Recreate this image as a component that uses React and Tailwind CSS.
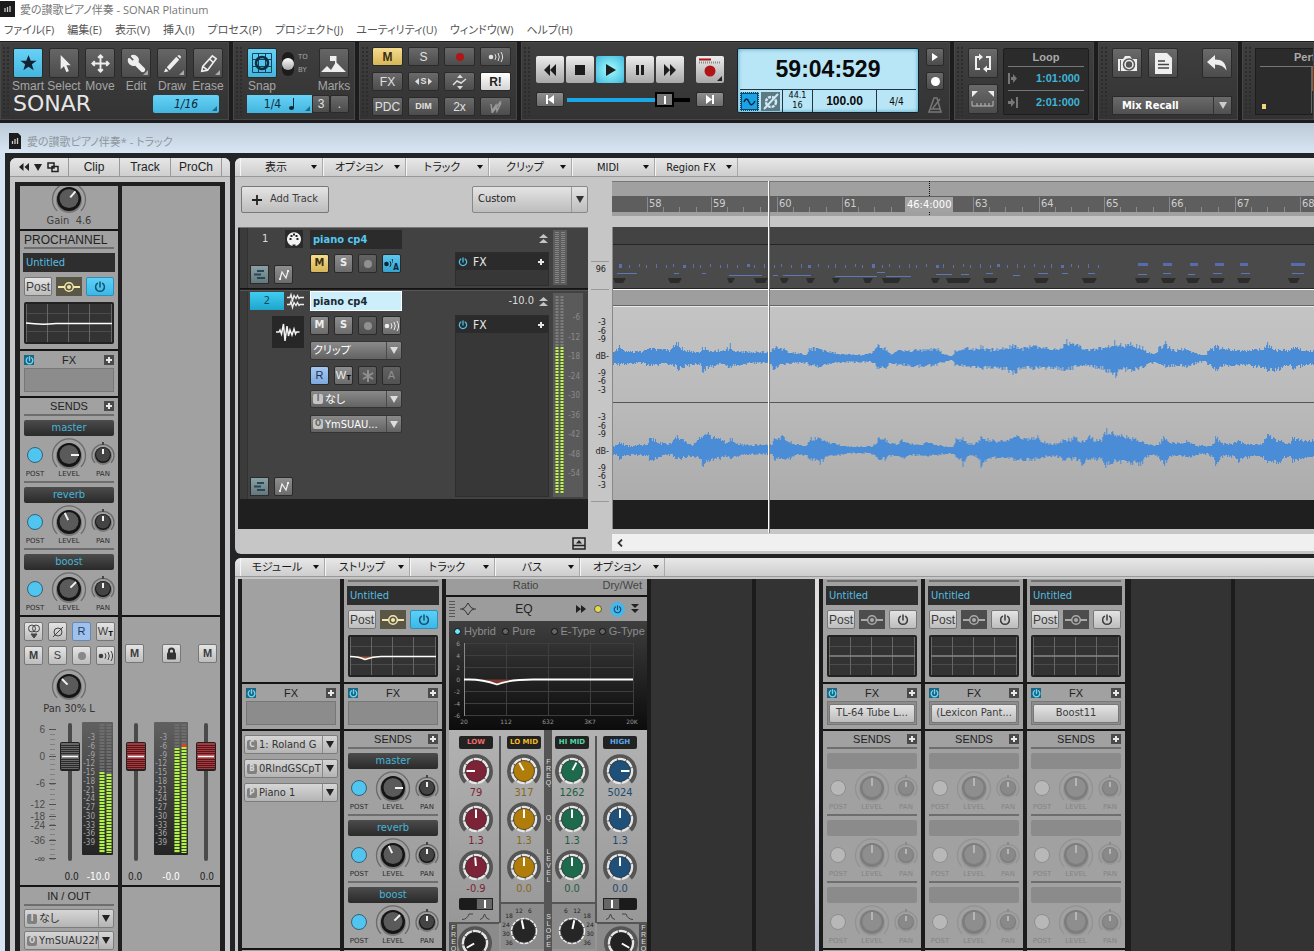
import { Wrench } from 'lucide-react'

const KNOB_COLORS = {
  red: '#7d2337',
  amber: '#b07c0a',
  green: '#1d6b4c',
  blue: '#1f5079',
}

/* ---------- drawings ---------- */

function PowerIcon({ size = 10, color = 'currentColor', width = 1.5 }) {
  return (
    <svg width={size} height={size} viewBox="0 0 12 12" fill="none" stroke={color} strokeWidth={width} strokeLinecap="round">
      <path d="M6 1v5M3.4 2.4a4.4 4.4 0 1 0 5.2 0" />
    </svg>
  )
}

function EchoIcon({ className = '' }) {
  return (
    <svg width="16" height="12" viewBox="0 0 16 12" className={className} fill="none" stroke="currentColor">
      <circle cx="3" cy="6" r="2.3" fill="currentColor" stroke="none" />
      <path d="M7 3.2q2 2.8 0 5.6M10 2q2.6 4 0 8M13 1q3.2 5 0 10" />
    </svg>
  )
}

function Plus({ className = '' }) {
  return (
    <svg width="10" height="10" viewBox="0 0 10 10" className={className}>
      <path d="M5 2v6M2 5h6" stroke="#e8e8e8" strokeWidth="2" />
    </svg>
  )
}

function Down({ className = '' }) {
  return (
    <svg width="8" height="7" viewBox="0 0 8 7" className={className}>
      <path d="M0 0h8L4 7z" fill="currentColor" />
    </svg>
  )
}

function DocLogo() {
  return (
    <svg width="12" height="16" viewBox="0 0 12 16">
      <path d="M0 0h9l3 3v13H0z" fill="#1c1c1c" />
      <path d="M3.5 8v3M6 6v5M8.5 5v6" stroke="#ccc" strokeWidth="1.3" />
    </svg>
  )
}

function Knob({ angle = 0, small = false, label }) {
  const w = small ? 24 : 36
  const c = w / 2
  const r = small ? 8 : 12
  const ring = small ? 11 : 16.5
  const d = ring * 0.72
  return (
    <span className="relative block shrink-0">
      <svg width={w} height="34" viewBox={`0 0 ${w} 34`} className="block">
        <path
          d={`M${c - d} ${19 + d}A${ring} ${ring} 0 1 1 ${c + d} ${19 + d}`}
          fill="none" stroke="#6b6b6b" strokeWidth="1.3"
        />
        {small && <path d={`M${c} 6v3`} stroke="#444" strokeWidth="2" />}
        <circle cx={c} cy="20" r={r + 1} fill="#000" opacity=".25" />
        <circle cx={c} cy="19" r={r} fill="#151515" />
        <circle cx={c} cy="18.5" r={small ? 7 : 9.5} fill={small ? '#444' : '#5a5a5a'} />
        <path d={`M${c} ${19 - r + 2}V${small ? 18 : 17}`} stroke="#f2f2f2" strokeWidth="2" transform={`rotate(${angle} ${c} 19)`} />
      </svg>
      <input type="range" aria-label={label} className="absolute inset-0 h-full w-full cursor-pointer opacity-0" />
    </span>
  )
}

function EqKnob({ color, angle, label }) {
  return (
    <span className="relative block shrink-0">
      <svg width="36" height="34" viewBox="0 0 36 34" className="block">
        <path d="M7.5 30A15 15 0 1 1 28.5 30" fill="none" stroke="#555" strokeWidth="4" />
        <circle cx="18" cy="19" r="12" fill="#444" stroke="#e6e6e6" strokeWidth="2.5" strokeDasharray="8 1" />
        <circle cx="18" cy="19" r="10.5" fill={KNOB_COLORS[color] || '#222'} stroke="#222" strokeOpacity=".4" />
        <path d="M18 9.5V18" stroke="#fff" strokeWidth="2" transform={`rotate(${angle} 18 19)`} />
      </svg>
      <input type="range" aria-label={label} className="absolute inset-0 h-full w-full cursor-pointer opacity-0" />
    </span>
  )
}

function Fader({ red = false, label }) {
  const grooves = [24, 26, 28, 30, 32, 38, 40, 42, 44, 46]
  return (
    <span className="relative block w-5 shrink-0">
      <svg width="20" height="142" className="block">
        <rect x="8" y="2" width="4" height="138" rx="2" fill="#4a4a4a" />
        <rect x="0" y="21" width="20" height="29" rx="2" fill="#222" />
        <rect x="1" y="22" width="18" height="26" rx="1" fill={red ? '#a33b41' : '#666'} />
        {grooves.map(y => <path key={y} d={`M1 ${y}.5h18`} stroke={red ? '#5b1418' : '#2b2b2b'} />)}
        <path d="M2 35.5h16" stroke="#fff" strokeWidth="1.5" />
      </svg>
      <input type="range" aria-label={label} className="absolute inset-0 h-full w-full cursor-pointer opacity-0" />
    </span>
  )
}

function StripMeter({ width, bars }) {
  return (
    <svg width={width} height="142" className="block shrink-0 font-['DejaVu_Sans_Condensed','DejaVu_Sans',sans-serif]">
      <defs>
        <linearGradient id="meterBack" x2="0" y2="1">
          <stop offset="0" stopColor="#606060" />
          <stop offset="1" stopColor="#242424" />
        </linearGradient>
      </defs>
      <rect y="1" width={width} height="133" rx="1" fill="url(#meterBack)" />
      {Array.from({ length: 13 }, (_, i) => (
        <text key={i} x="13" y={19 + i * 8.75} fontSize="8" textAnchor="end" fill="#a5a5a5">{-3 * (i + 1)}</text>
      ))}
      {bars.map(b => (
        <g key={b.x} strokeWidth="5" strokeDasharray="2 1">
          <path d={`M${b.x} 3V132`} stroke="#6d6d6d" />
          <path d={`M${b.x} ${b.top}V132`} stroke="#37501a" strokeDasharray="none" />
          <path d={`M${b.x} ${b.top}V132`} stroke="#b6f04e" />
          {b.clip && <path d={`M${b.x} ${b.top - 3}v3`} stroke="#d8402a" strokeDasharray="none" />}
        </g>
      ))}
    </svg>
  )
}

const FADER_MARKS = [['6', 8], ['0', 35], ['-6', 62], ['-12', 83], ['-18', 95], ['-24', 104], ['-36', 119], ['-∞', 137]]

function FaderScale() {
  return (
    <svg width="40" height="142" className="block shrink-0 font-['Liberation_Sans',sans-serif]">
      {Array.from({ length: 27 }, (_, i) => (
        <path key={i} d={`M30 ${8.5 + i * 5}h5`} stroke="#808080" />
      ))}
      {FADER_MARKS.map(([t, y]) => (
        <g key={t}>
          <text x="25" y={y + 4} fontSize="10" textAnchor="end" fill="#4a4a4a">{t}</text>
          <path d={`M29 ${y}.5h7`} stroke="#4f4f4f" />
        </g>
      ))}
    </svg>
  )
}

/* ---------- small controls ---------- */

function LightButton({ className = '', children, label }) {
  return (
    <button
      aria-label={label}
      className={`flex h-[19px] shrink-0 items-center justify-center rounded-[2px] border border-[#777] bg-linear-to-b from-[#e4e4e4] to-[#bdbdbd] text-[#3c3c3c] ${className}`}
    >
      {children}
    </button>
  )
}

const TONES = {
  dark: 'from-[#6a6a6a] to-[#4c4c4c] text-[#e0e0e0]',
  gray: 'from-[#8e8e8e] to-[#6c6c6c] text-[#eeeeee]',
  off: 'from-[#626262] to-[#525252] text-[#909090]',
  yellow: 'from-[#f5dc8e] to-[#d6b557] text-[#3a2f10]',
  sky: 'from-[#5cc8ef] to-[#37a3cf] text-[#082836]',
  blue: 'from-[#a5c8f2] to-[#7ea9de] text-[#1c3350]',
  white: 'from-white to-[#d4d4d4] text-[#222222]',
}

function DarkButton({ tone = 'dark', className = '', children, label }) {
  return (
    <button
      aria-label={label}
      className={`flex shrink-0 items-center justify-center rounded-[2px] border border-[#2a2a2a] bg-linear-to-b ${TONES[tone]} ${className}`}
    >
      {children}
    </button>
  )
}

function Picker({ icon, value, label, className = '', dark = false }) {
  return (
    <div
      className={`flex items-center rounded-[2px] border text-[11px] font-['DejaVu_Sans_Condensed','Noto_Sans_CJK_JP',sans-serif] ${dark
        ? 'border-[#333] bg-linear-to-b from-[#8a8a8a] to-[#636363] text-white'
        : 'border-[#7c7c7c] bg-linear-to-b from-[#d6d6d6] to-[#b4b4b4] text-[#333]'} ${className}`}
    >
      {icon && (
        <span className={`ml-[2px] flex h-[10px] w-[10px] shrink-0 items-center justify-center rounded-[2px] text-[8px] font-bold ${dark ? 'bg-[#c4c4c4] text-[#666]' : 'bg-[#808080] text-[#d8d8d8]'}`}>
          {icon}
        </span>
      )}
      <select aria-label={label} className="h-full min-w-0 flex-1 appearance-none overflow-hidden bg-transparent pl-[2px] leading-none outline-none [font-feature-settings:'palt']">
        <option>{value}</option>
      </select>
      <span className={`flex h-full w-[15px] shrink-0 items-center justify-center border-l ${dark ? 'border-[#4a4a4a] text-[#ddd]' : 'border-[#888] text-[#222]'}`}>
        <Down />
      </span>
    </div>
  )
}

/* ---------- channel strip sections ---------- */

function Divider() {
  return <div className="h-[2px] shrink-0 bg-[#141414]" />
}

function ProChannel({ on = false, curve = false }) {
  return (
    <div className="px-1 pb-[5px]">
      <div className="h-[2px] bg-[#6e6e6e]" />
      <button className="-mx-px mt-1 block h-[19px] w-[92px] bg-[#2e2e2e] px-[3px] text-left text-[11px] leading-[19px] text-[#55bfe0] font-['DejaVu_Sans_Condensed',sans-serif]">
        Untitled
      </button>
      <div className="mt-[5px] flex justify-between font-['Liberation_Sans',sans-serif]">
        <LightButton className="w-7 text-[12px]">Post</LightButton>
        <button aria-label="Routing" className={`flex h-[19px] w-[26px] items-center justify-center ${on ? 'bg-[#5a5646] text-[#f3e7ae]' : 'bg-[#4d4d4d] text-[#aaa]'}`}>
          <svg width="24" height="12" viewBox="0 0 24 12" fill="none" stroke="currentColor" strokeWidth="1.5">
            <path d="M1 6h7M16 6h7" strokeWidth="2" />
            <circle cx="12" cy="6" r="4.3" />
            <circle cx="12" cy="6" r="2" fill="currentColor" stroke="none" />
          </svg>
        </button>
        {on ? (
          <button aria-label="Power" className="flex h-[19px] w-7 items-center justify-center rounded-[2px] border border-[#2f8fb4] bg-linear-to-b from-[#5cd0f8] to-[#3bb8e8] text-[#14506b]">
            <PowerIcon size={12} />
          </button>
        ) : (
          <LightButton label="Power" className="w-7"><PowerIcon size={12} /></LightButton>
        )}
      </div>
      <svg width="90" height="42" className="mt-[6px] block">
        <rect width="90" height="42" rx="2" fill="#222" />
        <rect x="2" y="2" width="86" height="38" fill="#333" />
        <path d="M2 11.5h86M2 29.5h86" stroke="#4c4c4c" />
        <path d="M2.5 2v38M23.5 2v38M44.5 2v38M65.5 2v38M87.5 2v38" stroke="#666" />
        {curve && <path d="M3 21.500q8 0 14 2.500q8-2.500 16-2.500z" fill="#a2553a" />}
        {on
          ? <path d={curve ? 'M2 21.5q9 0 15 3q8-3 16-3h55' : 'M2 21q15 2 30 .5h56'} fill="none" stroke="#fff" strokeWidth="1.5" />
          : <path d="M2 21h86" stroke="#888" strokeWidth="1.5" />}
      </svg>
    </div>
  )
}

function PlusBox() {
  return (
    <button aria-label="Add" className="flex h-[10px] w-[10px] items-center justify-center bg-[#4a4a4a]">
      <Plus />
    </button>
  )
}

function FxRack({ plugin }) {
  return (
    <div className="h-[45px] px-1 pt-px">
      <div className="flex h-4 items-center justify-between text-[11px] text-[#222] font-['Liberation_Sans',sans-serif]">
        <button aria-label="FX power" className="flex h-[10px] w-[10px] items-center justify-center bg-[#1b6682] text-[#6fd4f2]">
          <PowerIcon size={9} width={1.8} />
        </button>
        <span>FX</span>
        <PlusBox />
      </div>
      <div className="flex h-6 items-center justify-center border border-[#777] bg-[#8c8c8c]">
        {plugin && (
          <LightButton className="w-[86px] text-[11px] whitespace-nowrap font-['DejaVu_Sans_Condensed',sans-serif]">{plugin}</LightButton>
        )}
      </div>
    </div>
  )
}

function Send({ name, level, last, off }) {
  return (
    <div>
      <div className={`h-4 rounded-[2px] text-center text-[11px] leading-4 text-[#46b4d8] font-['DejaVu_Sans_Condensed',sans-serif] ${off ? 'bg-[#8b8b8b]' : 'bg-linear-to-b from-[#4c4c4c] to-[#2a2a2a]'}`}>
        {name}
      </div>
      <div className={`grid h-[45px] grid-cols-[22px_46px_22px] text-[7px] leading-[9px] text-[#2c2c2c] font-['DejaVu_Sans',sans-serif] ${off ? 'opacity-25' : ''}`}>
        <div className="flex flex-col items-center">
          <span className="flex h-[34px] items-center pt-1">
            <button aria-label="Post" className={`h-4 w-4 rounded-full border ${off ? 'border-[#555] bg-white' : 'border-[#3a5f70] bg-[#4fc5f0]'}`} />
          </span>
          POST
        </div>
        <div className="flex flex-col items-center"><Knob angle={level} label="Send level" />LEVEL</div>
        <div className="flex flex-col items-center"><Knob small label="Send pan" />PAN</div>
      </div>
      {!last && <div className="mb-1 h-[2px] bg-[#6e6e6e]" />}
    </div>
  )
}

const SENDS = [
  { name: 'master', level: 90 },
  { name: 'reverb', level: -25 },
  { name: 'boost', level: 45 },
]

function Sends({ off = false }) {
  return (
    <div className="px-1">
      <div className="flex h-4 items-center justify-between text-[11px] text-[#222] font-['Liberation_Sans',sans-serif]">
        <span className="w-[10px]" />
        <span>SENDS</span>
        <PlusBox />
      </div>
      <div className="mb-1 h-[2px] bg-[#6e6e6e]" />
      {SENDS.map((s, i) => (
        <Send key={s.name} name={off ? '' : s.name} level={off ? 0 : s.level} last={i === 2} off={off} />
      ))}
    </div>
  )
}

/* ---------- top tool bar ---------- */

function Module({ className = '', children }) {
  return (
    <section className={`flex h-[78px] shrink-0 border border-[#474747] bg-linear-to-b from-[#3f3f3f] to-[#333] ${className}`}>
      <span className="my-[3px] ml-[1px] w-[9px] shrink-0 bg-[radial-gradient(#2c2c2c_1px,transparent_1px)] bg-[size:4px_4px]" />
      {children}
    </section>
  )
}

const TOOLS = [
  { name: 'Smart', on: true, icon: <path d="M12 3l2.3 6h6.200l-5 3.900 1.900 6.100L12 15.300 6.600 19l1.900-6.100-5-3.900h6.200z" fill="#112233" stroke="none" /> },
  { name: 'Select', icon: <path d="M8 3v15l3.400-3.200L14 21l2.600-1.200-2.600-6h4.500z" fill="#eee" stroke="none" /> },
  { name: 'Move', icon: <path d="M12 4v16M4 12h16M9.500 6L12 3.500 14.500 6M9.500 18l2.500 2.500 2.500-2.500M6 9.500L3.500 12 6 14.500M18 9.500l2.500 2.500-2.500 2.500" /> },
  { name: 'Edit', corner: true },
  { name: 'Draw', corner: true, icon: <path d="M3 21l2-4L8 20zM6 16L16 5l3 3L9 19zM17 4l2-1 2 2-1 2z" fill="#eee" stroke="none" /> },
  { name: 'Erase', corner: true, icon: <path d="M5 20l1-5L16 4l4 3-9 12zM6 15l5 4M13 7l4 4" strokeWidth="1.700" /> },
]

function Corner({ dark }) {
  return (
    <svg width="5" height="5" className="absolute right-[2px] bottom-[2px]">
      <path d="M5 0v5H0z" fill={dark ? '#1c6c88' : '#aaa'} />
    </svg>
  )
}

function ToolIcon({ tool }) {
  if (tool.name === 'Edit') return <Wrench size={19} strokeWidth={2} fill="#eee" className="-scale-x-100" />
  return <svg width="23" height="23" viewBox="0 0 24 24" fill="none" stroke="#eee" strokeWidth="2">{tool.icon}</svg>
}

const SKY = 'bg-linear-to-b from-[#67d2f7] to-[#43b5de] text-[#0e2a36]'

function ToolsModule() {
  return (
    <Module className="w-[229px]">
      <div className="pt-[5px] pl-[2px]">
        <div className="flex gap-[6px]">
          {TOOLS.map(t => (
            <button key={t.name} className="flex w-[30px] flex-col items-center text-[12px] text-[#a5a5a5]">
              <span className={`relative flex h-[30px] w-[30px] items-center justify-center rounded-[2px] border border-[#2a2a2a] ${t.on ? SKY : 'bg-linear-to-b from-[#666] to-[#4c4c4c] text-[#eee]'}`}>
                <ToolIcon tool={t} />
                {t.corner && <Corner />}
              </span>
              <span className="leading-4">{t.name}</span>
            </button>
          ))}
        </div>
        <div className="flex h-5 items-center justify-between">
          <span className="text-[22px] leading-5 text-[#e6e6e6] font-['DejaVu_Sans',sans-serif]">SONAR</span>
          <button className={`relative mr-[4px] h-[18px] w-[66px] rounded-[2px] text-[12px] italic font-['DejaVu_Sans_Condensed',sans-serif] ${SKY}`}>
            1/16<Corner dark />
          </button>
        </div>
      </div>
    </Module>
  )
}

function SnapModule() {
  return (
    <Module className="w-[122px]">
      <div className="ml-px w-[105px] pt-[5px] pl-[2px] text-[12px] text-[#a5a5a5]">
        <div className="flex">
          <button className="flex w-[30px] flex-col items-center">
            <span className={`flex h-[30px] w-[30px] items-center justify-center rounded-[2px] border border-[#2a2a2a] ${SKY}`}>
              <svg width="22" height="22" fill="none" stroke="#12455a">
                <path d="M1.5 1.5h19v19h-19zM7.5 1v20M14.5 1v20M1 7.5h20M1 14.5h20" />
                <circle cx="11" cy="11" r="6" strokeWidth="2.5" stroke="#0c2e3e" />
              </svg>
            </span>
            <span className="leading-4">Snap</span>
          </button>
          <button aria-label="Snap to or by" className="mt-1 ml-[5px] h-6 w-3 rounded-full bg-[#1c1c1c]">
            <span className="block h-3 w-3 rounded-full bg-linear-to-b from-white to-[#aaa]" />
          </button>
          <span className="mt-[3px] ml-[4px] flex w-4 flex-col text-[7px] leading-[13px] font-['DejaVu_Sans',sans-serif]"><span>TO</span><span>BY</span></span>
          <button className="ml-[4px] flex w-[32px] flex-col items-center">
            <span className="flex h-[30px] w-[30px] items-center justify-center rounded-[2px] border border-[#2a2a2a] bg-linear-to-b from-[#666] to-[#4c4c4c]">
              <svg width="26" height="22" fill="#eee">
                <path d="M0 20l6-6 4 4 5-8 10 10zM14 12V4h1.500v8zM9 4h6v5H9z" />
              </svg>
            </span>
            <span className="leading-4">Marks</span>
          </button>
        </div>
        <div className="mt-px flex h-[18px] w-[102px]">
          <button className={`relative flex w-[65px] items-center justify-center gap-2 ${SKY} font-['DejaVu_Sans_Condensed',sans-serif]`}>
            1/4
            <svg width="6" height="12"><ellipse cx="2.500" cy="10" rx="2.500" ry="2" fill="#0e2a36" /><path d="M4.500 0v10" stroke="#0e2a36" /></svg>
            <Corner dark />
          </button>
          <DarkButton className="w-[18px]">3</DarkButton>
          <DarkButton className="w-[19px]">.</DarkButton>
        </div>
      </div>
    </Module>
  )
}

const MIX_BUTTONS = [
  { id: 'mute', text: 'M', tone: 'yellow', bold: true },
  { id: 'solo', text: 'S' },
  { id: 'rec', text: <span className="h-2 w-2 rounded-full bg-[#b01616]" /> },
  { id: 'echo', text: <EchoIcon /> },
  { id: 'fx', text: 'FX' },
  {
    id: 'exclusive solo',
    bold: true,
    text: (
      <span className="flex items-center gap-px text-[9px]">
        <svg width="4" height="7"><path d="M4 0v7L0 3.500z" fill="#ddd" /></svg>
        S
        <svg width="4" height="7"><path d="M0 0v7l4-3.500z" fill="#ddd" /></svg>
      </span>
    ),
  },
  {
    id: 'automation',
    text: (
      <svg width="16" height="16">
        <path d="M1 11l4-4 4 2 5-4" fill="none" stroke="#ddd" strokeWidth="1.5" />
        <path d="M5 4l3-3.500L11 4zM5 12l3 3.500 3-3.500z" fill="#ddd" />
      </svg>
    ),
  },
  { id: 'read', text: 'R!', tone: 'white', bold: true },
  { id: 'pdc', text: 'PDC' },
  { id: 'dim', text: <span className="text-[9px]">DIM</span>, bold: true },
  { id: '2x', text: '2x' },
  { id: 'write', text: <svg width="16" height="12" fill="none" stroke="#999" strokeWidth="1.5"><path d="M3 3l1 7 4-6 1 6 4-8M4 12L13 0" /></svg> },
]

function MixModule() {
  return (
    <Module className="w-[158px]">
      <div className="grid grid-cols-4 content-start gap-x-[5px] gap-y-[6px] pt-1 pl-[2px] text-[12px]">
        {MIX_BUTTONS.map(b => (
          <DarkButton key={b.id} label={b.id} tone={b.tone} className={`h-[19px] w-[31px] ${b.bold ? 'font-bold' : ''}`}>
            {b.text}
          </DarkButton>
        ))}
      </div>
    </Module>
  )
}

const TRANSPORT = [
  ['Rewind', 'M14 2v12L8 8zM8 2v12L2 8z'],
  ['Stop', 'M3 3h10v10H3z'],
  ['Play', 'M4 2l10 6-10 6z'],
  ['Pause', 'M4 3h3v10H4zM9 3h3v10H9z'],
  ['Forward', 'M2 2v12l6-6zM8 2v12l6-6z'],
]

function TransportModule() {
  return (
    <Module className="w-[429px]">
      <div className="w-[192px] pt-[13px] pl-[4px]">
        <div className="flex gap-[2px]">
          {TRANSPORT.map(([name, d]) => (
            <button
              key={name}
              aria-label={name}
              className={`flex h-[27px] w-7 items-center justify-center rounded-[2px] ${name === 'Play' ? 'bg-[radial-gradient(#a6fdff,#3db7dc)]' : 'bg-linear-to-b from-[#ededed] to-[#a8a8a8]'}`}
            >
              <svg width="16" height="16"><path d={d} fill="#1d1d1d" /></svg>
            </button>
          ))}
          <button aria-label="Record" className="ml-[10px] h-[27px] w-7 rounded-[2px] bg-linear-to-b from-[#ededed] to-[#a8a8a8]">
            <svg width="28" height="27">
              <path d="M3 3.500h12" stroke="#b01414" strokeWidth="2" />
              <path d="M3 6.500h22" stroke="#888" strokeDasharray="1 1" strokeWidth="2" />
              <circle cx="14" cy="15" r="5.500" fill="#b01414" />
              <path d="M26 20v5h-5z" fill="#222" />
            </svg>
          </button>
        </div>
        <div className="mt-[9px] flex items-center">
          <DarkButton tone="gray" label="Go to start" className="h-[15px] w-7"><svg width="10" height="9"><path d="M1 0h2v9H1zM9 0v9L3 4.500z" fill="#fff" /></svg></DarkButton>
          <span className="relative mx-[3px] flex h-[15px] flex-1 items-center">
            <span className="h-1 w-[88px] bg-[#1ba6e6]" />
            <span className="flex h-[15px] w-[19px] items-center justify-center border-2 border-black bg-[#777]"><span className="h-2 w-[2px] bg-white" /></span>
            <span className="h-1 flex-1 bg-black" />
            <input type="range" aria-label="Position" className="absolute inset-0 h-full w-full opacity-0" />
          </span>
          <DarkButton tone="gray" label="Go to end" className="ml-[3px] h-[15px] w-7"><svg width="10" height="9"><path d="M7 0h2v9H7zM1 0v9l6-4.500z" fill="#fff" /></svg></DarkButton>
        </div>
      </div>
      <div className="mt-[5px] ml-[13px] flex h-[65px] w-[182px] flex-col rounded-[2px] border border-[#123] bg-[#b9e6f6] px-[2px] text-[#0a0a0a] shadow-[inset_0_0_4px_#4a9cbc]">
        <div className="flex h-[41px] items-center justify-center border-b border-[#234] text-[23px] font-bold">59:04:529</div>
        <div className="flex flex-1 items-center">
          <button aria-label="Audio engine" className="flex h-[19px] w-[19px] items-center justify-center border border-dotted border-[#7ccdf0] bg-[#0d4963]">
            <svg width="15" height="15"><rect width="15" height="15" fill="#1aa3e8" /><path d="M2 8q2.500-6 5 0t6-1" fill="none" stroke="#062a3c" strokeWidth="1.5" /></svg>
          </button>
          <button aria-label="Bypass" className="ml-[2px] flex h-[19px] w-[19px] items-center justify-center bg-[#5c7883]">
            <svg width="17" height="17"><circle cx="9" cy="9" r="5" fill="#5c7883" stroke="#cdeaf4" strokeWidth="2.5" strokeDasharray="3 1" /><path d="M2 16L16 1" stroke="#cdeaf4" strokeWidth="2" /></svg>
          </button>
          <span className="ml-[2px] flex h-[22px] w-[30px] flex-col items-center border-l border-[#234] text-[9px] leading-[10px] font-['DejaVu_Sans_Condensed',sans-serif]"><span>44.1</span><span>16</span></span>
          <span className="flex h-[22px] w-[64px] items-center justify-center border-l border-[#234] text-[12px] font-bold">100.00</span>
          <span className="flex h-[22px] flex-1 items-center justify-center border-l border-[#234] text-[10px] font-['DejaVu_Sans_Condensed',sans-serif]">4/4</span>
        </div>
      </div>
      <div className="mt-[5px] ml-[7px] flex flex-col gap-[6px]">
        <DarkButton label="Play preview" className="h-[18px] w-[18px]"><svg width="6" height="8"><path d="M0 0l6 4-6 4z" fill="#fff" /></svg></DarkButton>
        <DarkButton label="Record preview" className="h-[18px] w-[18px]"><span className="h-[9px] w-[9px] rounded-full bg-white" /></DarkButton>
        <button aria-label="Metronome"><svg width="18" height="18" fill="none" stroke="#777"><path d="M3 16L8 2h3l4 14zM7 12l7-9M5 13h9" strokeWidth="1.5" /></svg></button>
      </div>
    </Module>
  )
}

function BigDark({ label, children, className = '' }) {
  return <DarkButton label={label} className={`h-[30px] w-[30px] ${className}`}>{children}</DarkButton>
}

function LoopModule() {
  return (
    <Module className="w-[140px]">
      <div className="flex flex-col gap-[6px] pt-[5px] pl-[3px]">
        <BigDark label="Loop">
          <svg width="20" height="20" fill="none" stroke="#eee" strokeWidth="2">
            <path d="M7 4H3v12h4M13 4h4v12h-4" />
            <path d="M6 .5v7L10 4zM14 12.500v7L10 16z" fill="#eee" stroke="none" />
          </svg>
        </BigDark>
        <BigDark label="Loop from selection">
          <svg width="24" height="18"><path d="M1 1h6L1 7zM23 1h-6l6 6z" fill="#eee" /><path d="M1 11v5h21v-5M6 13v3M10 13v3M14 13v3M18 13v3" stroke="#bbb" fill="none" /></svg>
        </BigDark>
      </div>
      <div className="mt-[5px] ml-[5px] h-[67px] w-[86px] rounded-[2px] border border-[#1d1d1d] bg-[#2b2b2b] px-1 text-[#aaa]">
        <div className="border-b border-[#777] text-center text-[11px] leading-[17px] font-bold">Loop</div>
        {['1:01:000', '2:01:000'].map((t, i) => (
          <div key={t} className={`flex items-center justify-between text-[11px] leading-[23px] font-bold text-[#3fb4d6] ${i ? '' : 'border-b border-[#777]'}`}>
            <svg width="10" height="11" fill="#777">
              {i ? <path d="M8 0h2v11H8zM0 4h3V1l4 4.500L3 10V7H0z" /> : <path d="M0 0h2v11H0zM3 4h2V1l4 4.500L5 10V7H3z" />}
            </svg>
            <span className="pr-1">{t}</span>
          </div>
        ))}
      </div>
    </Module>
  )
}

function RecallModule() {
  return (
    <Module className="w-[140px]">
      <div className="w-[123px] pt-[5px] pl-[3px]">
        <div className="flex gap-[6px]">
          <BigDark label="Snapshot">
            <svg width="21" height="17">
              <path d="M1 4h5l2-3h5l2 3h5v12H1z" fill="#eee" />
              <circle cx="12" cy="9.5" r="5.5" fill="#eee" stroke="#555" strokeWidth="1.5" />
              <circle cx="12" cy="9.5" r="3.2" fill="#555" />
              <path d="M3.500 5v11" stroke="#666" />
            </svg>
          </BigDark>
          <BigDark label="Notes">
            <svg width="17" height="21"><path d="M0 0h12l5 5v16H0z" fill="#eee" /><path d="M3 8h7M3 11.500h11M3 15h11" stroke="#444" strokeWidth="1.5" /></svg>
          </BigDark>
          <BigDark label="Undo" className="ml-auto">
            <svg width="20" height="17"><path d="M0 7l8-7v4.500c7 0 11 3 11.500 11Q16 9.500 8 9.500V14z" fill="#eee" /></svg>
          </BigDark>
        </div>
        <div className="mt-[18px] flex h-[19px] w-[120px] items-center border border-[#2a2a2a] bg-linear-to-b from-[#6a6a6a] to-[#505050] text-white">
          <select aria-label="Mix Recall" className="min-w-0 flex-1 appearance-none bg-transparent pl-[9px] text-[11px] leading-none font-bold outline-none font-['DejaVu_Sans_Condensed',sans-serif]">
            <option>Mix Recall</option>
          </select>
          <span className="flex h-full w-[18px] items-center justify-center border-l border-[#333] text-[#ccc]"><Down /></span>
        </div>
      </div>
    </Module>
  )
}

function ToolBar() {
  return (
    <div className="flex h-[82px] shrink-0 gap-1 overflow-hidden bg-[#1c1c1c] pt-px font-['Liberation_Sans',sans-serif]">
      <ToolsModule />
      <SnapModule />
      <MixModule />
      <TransportModule />
      <LoopModule />
      <RecallModule />
      <Module className="min-w-[72px] flex-1 overflow-hidden">
        <div className="mt-[5px] ml-[2px] h-[67px] flex-1 border border-[#1d1d1d] bg-[#2b2b2b] pl-1">
          <div className="flex h-[18px] items-center border-b border-[#777] pl-[34px] text-[11px] font-bold text-[#aaa]">Perf</div>
          <div className="flex h-[46px] items-end">
            <span className="mb-[4px] ml-[2px] h-[5px] w-1 bg-[#efd67c]" />
            <span className="ml-[45px] h-full w-px bg-[#666]" />
            <span className="h-6 w-3 self-start bg-[#a45a22]" />
          </div>
        </div>
      </Module>
    </div>
  )
}

/* ---------- inspector ---------- */

function WriteLabel() {
  return <>W<span className="pt-1 text-[8px] leading-none font-bold text-black">T</span></>
}

function Inspector() {
  return (
    <aside className="flex w-[220px] shrink-0 flex-col overflow-hidden rounded-t-[6px] bg-[#c6c6c6] font-['Liberation_Sans',sans-serif]">
      <div className="flex h-[19px] shrink-0 border-b border-[#999] bg-linear-to-b from-[#e6e6e6] to-[#cfcfcf] text-[12px] text-[#222]">
        <span className="flex w-[58px] items-center justify-center gap-[5px]">
          <svg width="10" height="8"><path d="M4.500 0v8L0 4zM10 0v8L5.500 4z" fill="#222" /></svg>
          <Down />
          <svg width="12" height="11" fill="none" stroke="#222" strokeWidth="1.5"><path d="M1 1h6v5H1zM5 4.500h6v5H5z" fill="#ddd" /></svg>
        </span>
        {['Clip', 'Track', 'ProCh'].map(t => (
          <button key={t} className="w-[51px] border-l border-[#999]">{t}</button>
        ))}
        <span className="flex-1 border-l border-[#999]" />
      </div>
      <div className="mx-[5px] mt-[5px] flex flex-1 gap-1 bg-[#1f1f1f] px-[5px] pt-1">
        <div className="flex w-[98px] flex-col bg-[#a1a1a1]">
          <div className="h-[43px] overflow-hidden text-center text-[#3c3c3c]">
            <div className="-mt-[6px] flex justify-center"><Knob angle={40} label="Gain" /></div>
            <span className="block text-[11px] leading-[14px] font-['DejaVu_Sans_Condensed',sans-serif]">Gain&nbsp; 4.6</span>
          </div>
          <Divider />
          <h2 className="h-4 pl-1 text-[12px] leading-[18px] text-[#222]">PROCHANNEL</h2>
          <ProChannel on />
          <Divider />
          <FxRack />
          <Divider />
          <Sends />
          <Divider />
          <div className="flex h-[268px] flex-col px-1 pt-[5px]">
            <div className="grid grid-cols-[19px_19px_19px_19px] gap-[5px] text-[11px]">
              <LightButton label="Interleave">
                <svg width="14" height="15" fill="none" stroke="#444"><circle cx="5" cy="4.5" r="3.5" /><circle cx="9" cy="4.5" r="3.5" /><path d="M4 10h6l-3 4z" fill="#444" /></svg>
              </LightButton>
              <LightButton label="Phase"><svg width="12" height="12" fill="none" stroke="#444"><circle cx="6" cy="6" r="4" /><path d="M1 11L11 1" /></svg></LightButton>
              <button className="flex h-[19px] items-center justify-center rounded-[2px] border border-[#6688b5] bg-[#9fc1ec] text-[#1f3b60]">R</button>
              <LightButton><WriteLabel /></LightButton>
              <LightButton className="font-bold">M</LightButton>
              <LightButton>S</LightButton>
              <LightButton label="Record arm"><span className="h-2 w-2 rounded-full bg-[#888]" /></LightButton>
              <LightButton label="Echo"><EchoIcon /></LightButton>
            </div>
            <div className="mt-[2px] flex justify-center"><Knob angle={-45} label="Pan" /></div>
            <div className="text-center text-[11px] leading-4 whitespace-nowrap text-[#333] font-['DejaVu_Sans_Condensed',sans-serif]">Pan 30% L</div>
            <div className="-mx-1 mt-1 flex">
              <FaderScale />
              <Fader label="Volume" />
              <span className="w-[2px]" />
              <StripMeter width={31} bars={[{ x: 20, top: 51 }, { x: 27, top: 53 }]} />
            </div>
            <div className="mt-[6px] flex justify-end gap-2 pr-1 text-[10px] leading-4 text-[#222] font-['DejaVu_Sans_Condensed',sans-serif]">
              <span>0.0</span><span className="text-white">-10.0</span>
            </div>
          </div>
          <Divider />
          <div className="px-1 pt-[2px]">
            <h2 className="text-center text-[11px] leading-[15px] text-[#222]">IN / OUT</h2>
            <div className="mb-[3px] h-[2px] bg-[#6e6e6e]" />
            <Picker icon="I" value="なし" label="Input" className="h-[19px]" />
            <Picker icon="O" value="YmSUAU22M" label="Output" className="mt-[3px] h-[19px]" />
          </div>
        </div>
        <div className="flex w-[98px] flex-col bg-[#a1a1a1]">
          <div className="h-[429px]" />
          <Divider />
          <div className="flex h-[268px] flex-col">
            <div className="mt-[27px] flex h-[19px] justify-between px-[3px] text-[11px] font-bold">
              <LightButton className="w-[19px]">M</LightButton>
              <LightButton label="Lock" className="w-[19px]">
                <svg width="11" height="13"><path d="M3 6V4a2.500 2.500 0 0 1 5 0v2" fill="none" stroke="#333" strokeWidth="2" /><rect x="1" y="5.500" width="9" height="7" rx="1" fill="#333" /></svg>
              </LightButton>
              <LightButton className="w-[19px]">M</LightButton>
            </div>
            <div className="mt-[58px] flex gap-2 pl-1">
              <Fader red label="Left volume" />
              <StripMeter width={34} bars={[{ x: 23, top: 27 }, { x: 30, top: 26, clip: true }]} />
              <Fader red label="Right volume" />
            </div>
            <div className="mt-[6px] flex justify-between px-[6px] text-[10px] leading-4 text-[#222] font-['DejaVu_Sans_Condensed',sans-serif]">
              <span>0.0</span><span className="text-white">-0.0</span><span>0.0</span>
            </div>
          </div>
          <Divider />
        </div>
      </div>
    </aside>
  )
}

/* ---------- track view ---------- */

function MenuStrip({ items, wide = false }) {
  return (
    <div className="flex h-[19px] shrink-0 border-b border-[#999] bg-linear-to-b from-[#e8e8e8] to-[#cdcdcd] pl-[5px] text-[12px] text-[#1a1a1a] font-['DejaVu_Sans_Condensed','Noto_Sans_CJK_JP',sans-serif]">
      {items.map(t => (
        <button
          key={t}
          className={`flex items-center border-l border-l-[#f5f5f5] border-r border-r-[#aaa] pr-[5px] text-[11px] leading-none whitespace-nowrap [font-feature-settings:'palt'] ${wide ? 'w-[85px]' : 'w-[83px]'}`}
        >
          <span className="flex-1 text-center">{t}</span>
          <svg width="6" height="4"><path d="M0 0h6L3 4z" fill="#111" /></svg>
        </button>
      ))}
    </div>
  )
}

function SmallPair() {
  return (
    <div className="flex gap-[5px] pl-[2px]">
      <button aria-label="Lanes" className="flex h-[19px] w-[19px] items-center justify-center border border-[#2b2b2b] bg-linear-to-b from-[#8ba0a6] to-[#64777c]">
        <svg width="13" height="11" stroke="#264854" strokeWidth="2"><path d="M4 2h7M1 5.500h7M4 9h8" /></svg>
      </button>
      <DarkButton tone="gray" label="Automation" className="h-[19px] w-[19px]">
        <svg width="12" height="12" fill="none" stroke="#eee" strokeWidth="1.3"><path d="M2 10L4 3l4 6 2-7" /><path d="M1 9h2v2H1zM9 1h2v2H9z" fill="#eee" stroke="none" /></svg>
      </DarkButton>
    </div>
  )
}

function TrackFx({ className = '' }) {
  return (
    <div className={`w-[94px] shrink-0 border border-[#2d2d2d] bg-[#373737] ${className}`}>
      <div className="flex h-[17px] items-center gap-[5px] bg-[#2b2b2b] px-[2px] text-[12px] text-[#e6e6e6] font-['DejaVu_Sans_Condensed',sans-serif]">
        <PowerIcon color="#4cc2ea" />
        FX
        <button aria-label="Add effect" className="ml-auto"><Plus /></button>
      </div>
    </div>
  )
}

function TrackButtons({ midi = false }) {
  return (
    <div className="flex gap-[5px] text-[11px] font-bold">
      <DarkButton tone={midi ? 'yellow' : 'gray'} className="h-[19px] w-[19px]">M</DarkButton>
      <DarkButton tone="gray" className="h-[19px] w-[19px]">S</DarkButton>
      <DarkButton tone="off" label="Arm" className="h-[19px] w-[19px]"><span className="h-2 w-2 rounded-full bg-[#909090]" /></DarkButton>
      <DarkButton tone={midi ? 'sky' : 'gray'} label="Input echo" className="h-[19px] w-[19px]">
        {midi ? (
          <>
            <svg width="9" height="12" fill="none" stroke="currentColor"><circle cx="2.500" cy="6" r="2.300" fill="currentColor" stroke="none" /><path d="M6 3.200q2 2.800 0 5.600M8 1q1.500 2 1 4" /></svg>
            <span className="pt-2 text-[8px] leading-none">A</span>
          </>
        ) : <EchoIcon />}
      </DarkButton>
    </div>
  )
}

function UpArrows() {
  return <svg width="9" height="10"><path d="M4.500 0L9 4H0zM4.500 5L9 9H0z" fill="#c4c4c4" /></svg>
}

function TrackList() {
  return (
    <div className="ml-[3px] h-[302px] border-t border-[#777] bg-[#1f1f1f] pl-[2px] text-[#ddd] font-['DejaVu_Sans_Condensed','Noto_Sans_CJK_JP',sans-serif]">
      <div className="flex h-[60px] bg-[#424242]">
        <span className="w-2 border-r border-[#333] bg-[#3b3b3b]" />
        <div className="flex w-[62px] flex-col justify-between pb-1">
          <div className="flex h-[22px] items-center pl-[14px] text-[11px]">
            <span className="w-[23px]">1</span>
            <svg width="18" height="18"><rect width="18" height="18" fill="#2a2a2a" /><path d="M7.5 16A7 7 0 1 1 10.5 16V14.5h-3z" fill="#f2f2f2" /><path d="M4.5 9h2M11.5 9h2M5.5 6h2M10.5 6h2M8 4.5h2" stroke="#222" strokeWidth="1.8" /></svg>
          </div>
          <SmallPair />
        </div>
        <div className="w-[92px] pt-[2px]">
          <input aria-label="Track 1 name" defaultValue="piano cp4" className="mb-[5px] block h-[19px] w-full bg-[#2b2b2b] px-[3px] text-[11px] font-bold text-[#54c8f0] outline-none" />
          <TrackButtons midi />
        </div>
        <div className="ml-[53px]">
          <div className="flex h-[21px] items-center justify-end pr-px"><UpArrows /></div>
          <TrackFx className="mt-[3px] h-[34px]" />
        </div>
        <svg width="14" height="55" className="mt-[2px] ml-1" strokeDasharray="1 1" strokeWidth="4"><rect width="14" height="55" fill="#5b5b5b" stroke="none" /><path d="M4 2v51M10 2v51" stroke="#858585" /></svg>
      </div>
      <div className="h-px bg-[#141414]" />
      <div className="mt-px flex h-[209px] border-t border-[#555] bg-[#424242]">
        <span className="w-2 border-r border-[#333] bg-[#3b3b3b]" />
        <div className="flex w-[62px] flex-col pb-[3px]">
          <div className="flex items-center gap-[3px] pt-px pl-[2px] text-[11px]">
            <span className="h-[18px] w-[34px] bg-linear-to-b from-[#3fcdf0] to-[#1ea5cc] text-center leading-[18px] text-[#11475a]">2</span>
            <svg width="18" height="18"><path d="M0 5.5h3l1-3 1.500 6 1.500-5 2 3 1.500-3 1.500 3 1-1h4M0 12.5h3l1-3 1.500 6 1.500-5 2 3 1.500-3 1.500 3 1-1h4" fill="none" stroke="#eee" strokeWidth="1.3" /></svg>
          </div>
          <span className="mt-[6px] ml-6 flex h-8 w-8 items-center justify-center bg-[#272727]">
            <svg width="26" height="24"><path d="M1 12h3l1-2 1.500 4 2-10 1.500 17 2-15 1.500 10 1.500-6 2 5 2-6 1.500 5 1-2h3" fill="none" stroke="#f2f2f2" strokeWidth="1.5" /></svg>
          </span>
          <span className="flex-1" />
          <SmallPair />
        </div>
        <div className="w-[92px]">
          <input aria-label="Track 2 name" defaultValue="piano cp4" className="mb-[5px] block h-[20px] w-full border border-white bg-[#cdeefb] px-[2px] text-[11px] font-bold text-[#1a2a33] outline-none" />
          <TrackButtons />
          <Picker dark value="クリップ" label="Edit filter" className="mt-[6px] h-[19px]" />
          <div className="mt-[6px] flex gap-[5px] text-[11px] font-['Liberation_Sans',sans-serif]">
            <DarkButton tone="blue" className="h-[19px] w-[19px]">R</DarkButton>
            <DarkButton tone="gray" className="h-[19px] w-[19px]"><WriteLabel /></DarkButton>
            <DarkButton tone="off" label="Freeze" className="h-[19px] w-[19px]"><svg width="12" height="12"><path d="M6 0v12M1 3l10 6M1 9l10-6" stroke="#909090" strokeWidth="2" /></svg></DarkButton>
            <DarkButton tone="off" className="h-[19px] w-[19px]">A</DarkButton>
          </div>
          <Picker dark icon="I" value="なし" label="Track input" className="mt-[5px] h-[18px]" />
          <Picker dark icon="O" value="YmSUAU..." label="Track output" className="mt-[7px] h-[18px]" />
        </div>
        <div className="ml-[53px]">
          <div className="flex h-[21px] items-center justify-end gap-[5px] pr-px text-[11px]"><span>-10.0</span><UpArrows /></div>
          <TrackFx className="mt-[3px] h-[182px]" />
        </div>
        <svg width="30" height="204" className="mt-[2px] ml-1">
          <rect width="30" height="204" fill="#5a5a5a" />
          <g strokeWidth="3" strokeDasharray="2 1">
            <path d="M4 3v198M9 3v198" stroke="#7c7c7c" />
            <path d="M4 54v147M9 54v147" stroke="#476320" strokeDasharray="none" />
            <path d="M4 54v147M9 54v147" stroke="#c3ee6c" />
          </g>
          {Array.from({ length: 9 }, (_, i) => (
            <text key={i} x="27" y={27 + i * 19.5} fontSize="8" textAnchor="end" fill="#8a8a8a">{-6 * (i + 1)}</text>
          ))}
        </svg>
      </div>
    </div>
  )
}

const DB_MARKS = [['-3', 0], ['-6', 9], ['-9', 17], ['dB-', 34], ['-9', 51], ['-6', 59], ['-3', 68]]

function LevelScale() {
  return (
    <svg width="24" height="352" className="mt-[19px] block shrink-0 font-['DejaVu_Sans_Condensed',sans-serif]" fill="#222" fontSize="9">
      <path d="M3 65.5h18M3 93.5h18M3 305.5h18" stroke="#999" fill="none" />
      <text x="18" y="76" textAnchor="end">96</text>
      {[129, 224].map(top => DB_MARKS.map(([t, y]) => (
        <text key={`${top}-${y}`} x={t === 'dB-' ? 21 : 18} y={top + y} textAnchor="end">{t}</text>
      )))}
    </svg>
  )
}

// left edge of each measure in the ruler
const MEASURES = [[58, 37], [59, 101], [60, 167], [61, 232], [63, 363], [64, 429], [65, 494], [66, 559], [67, 625], [68, 690]]

function Ruler() {
  return (
    <svg className="block h-[35px] w-full font-['DejaVu_Sans_Condensed',sans-serif]">
      <rect width="100%" height="35" fill="#a0a0a0" />
      <path d="M0 .5h3000" stroke="#777" />
      <rect y="15" width="100%" height="16" fill="#5e5e5e" />
      {MEASURES.map(([n, x]) => (
        <g key={n}>
          <path d={`M${x - 1.5} 16v15M${x + 14.5} 26v5M${x + 30.5} 26v5M${x + 47.5} 26v5`} stroke="#8b8b8b" />
          <text x={x} y="26" fontSize="11" fill="#cfcfcf">{n}</text>
        </g>
      ))}
      <rect x="293" y="16" width="48" height="15" fill="#a2a2a2" />
      <text x="295" y="27" fontSize="11" fill="#fff">46:4:000</text>
      <path d="M317.5 0v15M317.5 31v4" stroke="#111" strokeDasharray="1 1" />
    </svg>
  )
}

const BLOBS = [[0, 13], [55, 14], [114, 8], [141, 14], [167, 9], [193, 9], [219, 8], [250, 10], [269, 19], [318, 9], [333, 25], [370, 15], [421, 15], [469, 15], [522, 15], [548, 15], [573, 14], [597, 15], [624, 14], [675, 12]]
const BARS = [[4, 46, 20], [61, 46, 5], [89, 46, 4], [116, 48, 33], [160, 48, 5], [170, 48, 28], [222, 49, 42], [273, 49, 25], [264, 45, 8], [323, 47, 16], [348, 47, 8], [373, 46, 7], [400, 48, 7], [425, 46, 10], [449, 46, 6], [475, 46, 7], [525, 47, 9], [550, 46, 8], [575, 47, 7], [600, 46, 9], [628, 46, 9], [679, 46, 12]]
const CHORDS = [[525, 10], [550, 9], [577, 8], [602, 9], [627, 8], [678, 14]]

function MidiClip() {
  return (
    <svg className="block h-[62px] w-full">
      <rect width="100%" height="62" fill="#4a4a4a" />
      <rect width="100%" height="17" fill="#434343" />
      <path d="M0 17.5h3000M0 61.5h3000" stroke="#252525" />
      {Array.from({ length: 54 }, (_, i) => (
        <rect key={i} x={6 + i * 9 + (i % 3)} y={37 + (i % 2)} width={i % 7 === 0 ? 3 : 1} height={i % 4 === 0 ? 4 : 3} fill="#5a70b0" />
      ))}
      {CHORDS.map(([x, w]) => <rect key={x} x={x} y="36" width={w} height="3" fill="#566bb0" />)}
      {BARS.map(([x, y, w]) => <rect key={x} x={x} y={y} width={w} height="1" fill="#5d78b8" />)}
      {BLOBS.map(([x, w]) => <path key={x} d={`M${x} 51h${w}l-3 5h-${w - 5}z`} fill="#2c2c2c" />)}
    </svg>
  )
}

// [x, height above the zero line, depth below it]
const LEFT_WAVE = [
  [0, 7, 6], [6, 11, 7], [15, 6, 6], [26, 6, 5], [35, 9, 8], [54, 8, 6], [61, 13, 8], [65, 14, 13], [74, 7, 8], [85, 6, 6], [89, 11, 13], [99, 7, 9], [106, 7, 6], [114, 9, 8], [117, 13, 10], [124, 7, 7],
  [145, 6, 5], [157, 6, 5], [160, 10, 12], [170, 9, 7], [180, 5, 5], [192, 4, 5], [196, 9, 8], [207, 9, 9], [216, 6, 6], [229, 4, 4], [243, 3, 4], [255, 5, 4], [261, 8, 6], [264, 14, 10], [272, 9, 11], [279, 4, 5],
  [284, 7, 7], [300, 8, 9], [316, 8, 8], [325, 9, 7], [332, 4, 4], [338, 2, 2], [342, 7, 7], [352, 9, 9], [361, 9, 9], [368, 11, 12], [375, 8, 9], [386, 9, 10], [400, 12, 17], [411, 9, 10], [418, 12, 10], [434, 9, 10],
  [449, 9, 11], [452, 18, 15], [466, 12, 9], [475, 8, 8], [485, 10, 10], [493, 11, 13], [502, 15, 18], [511, 12, 12], [519, 15, 13], [530, 10, 10], [541, 4, 5], [546, 10, 7], [553, 14, 9], [562, 8, 8], [575, 8, 9],
  [591, 3, 4], [596, 8, 7], [603, 12, 13], [612, 9, 8], [626, 7, 7], [644, 8, 9], [655, 13, 12], [667, 8, 12], [676, 7, 7], [680, 12, 12], [692, 8, 8], [702, 7, 6],
]
const RIGHT_WAVE = [
  [0, 4, 4], [6, 9, 9], [15, 4, 5], [26, 5, 5], [34, 5, 5], [36, 14, 11], [45, 8, 8], [55, 6, 5], [62, 14, 9], [70, 10, 8], [79, 5, 6], [84, 11, 8], [89, 12, 14], [91, 18, 17], [98, 14, 10], [108, 11, 8], [115, 7, 6], [117, 14, 9], [123, 6, 6], [140, 5, 4],
  [157, 5, 5], [161, 13, 9], [171, 12, 9], [178, 8, 8], [190, 4, 5], [197, 11, 10], [207, 11, 13], [217, 7, 7], [228, 5, 5], [243, 3, 3], [258, 4, 4], [265, 11, 10], [272, 10, 9], [280, 6, 6], [290, 10, 8], [304, 5, 5], [313, 8, 7], [325, 5, 5],
  [338, 3, 4], [343, 10, 8], [350, 11, 16], [356, 6, 6], [366, 9, 9], [368, 16, 17], [380, 9, 8], [391, 8, 8], [401, 17, 11], [414, 11, 10], [424, 13, 9], [438, 6, 6], [450, 9, 10], [462, 13, 9], [469, 9, 14], [477, 14, 10], [486, 9, 9], [493, 19, 15], [502, 16, 12],
  [514, 14, 13], [528, 9, 15], [540, 5, 5], [551, 12, 15], [562, 7, 6], [575, 9, 8], [590, 4, 4], [600, 5, 8], [603, 14, 16], [612, 6, 6], [626, 9, 11], [643, 5, 6], [655, 15, 13], [668, 9, 14], [676, 6, 6], [680, 14, 12], [692, 9, 8], [702, 9, 6],
]

// integer hash, keeps the jitter the same on every render
function jitter(x, seed) {
  let h = Math.imul(x + 1, 374761393) ^ Math.imul(seed, 668265263)
  h = Math.imul(h ^ (h >>> 13), 1274126177)
  return ((h ^ (h >>> 16)) >>> 0) / 4294967296
}

// sharp attack near the peak, body close to the lower neighbour
function spike(a, b, t) {
  return b > a ? a + (b - a) * t * t * t : b + (a - b) * (1 - t) * (1 - t)
}

function wavePath(points, mid, seed) {
  const top = []
  const bottom = []
  let k = 0
  for (let x = 0; x < 702; x++) {
    while (k < points.length - 2 && points[k + 1][0] <= x) k++
    const [x0, u0, d0] = points[k]
    const [x1, u1, d1] = points[k + 1]
    const t = (x - x0) / (x1 - x0)
    const up = Math.round(spike(u0, u1, t) * (0.78 + jitter(x, seed) * 0.45))
    const down = Math.round(spike(d0, d1, t) * (0.75 + jitter(x, seed + 7) * 0.45))
    top.push(`${x} ${mid - up}L${x + 1} ${mid - up}`)
    bottom.unshift(`${x + 1} ${mid + down}L${x} ${mid + down}`)
  }
  return `M${top.join('L')}L${bottom.join('L')}Z`
}

function AudioClip() {
  return (
    <div className="h-[211px] border-t border-white">
      <div className="h-[15px] bg-[#9e9e9e]" />
      <div className="h-[97px] border-t border-[#666] bg-linear-to-b from-[#c4c4c4] to-[#bababa] shadow-[inset_0_1px_#e8e8e8]">
        <svg className="block h-full w-full" viewBox="0 0 702 96" preserveAspectRatio="none"><path d={wavePath(LEFT_WAVE, 52, 1)} fill="#4a8cd6" /></svg>
      </div>
      <div className="h-[98px] border-t border-[#555] bg-linear-to-b from-[#bababa] to-[#acacac]">
        <svg className="block h-full w-full" viewBox="0 0 702 97" preserveAspectRatio="none"><path d={wavePath(RIGHT_WAVE, 47, 2)} fill="#4a8cd6" /></svg>
      </div>
    </div>
  )
}

function TrackView() {
  return (
    <section className="flex h-[396px] shrink-0 flex-col overflow-hidden rounded-l-[6px] bg-[#c6c6c6]">
      <MenuStrip items={['表示', 'オプション', 'トラック', 'クリップ', 'MIDI', 'Region FX']} />
      <div className="flex min-h-0 flex-1">
        <div className="flex w-[353px] shrink-0 flex-col">
          <div className="flex h-[50px] shrink-0 justify-between pt-[9px] pl-[6px] font-['DejaVu_Sans_Condensed',sans-serif]">
            <LightButton className="h-[27px] w-[88px] gap-2 text-[11px]">
              <svg width="10" height="10"><path d="M5 0v10M0 5h10" stroke="#222" strokeWidth="1.8" /></svg>
              Add Track
            </LightButton>
            <div className="flex h-[27px] w-[116px] items-center rounded-[2px] border border-[#888] bg-linear-to-b from-[#e4e4e4] to-[#bdbdbd]">
              <select aria-label="Track control" className="min-w-0 flex-1 appearance-none bg-transparent pl-[5px] text-[11px] text-[#222] outline-none"><option>Custom</option></select>
              <span className="flex h-full w-4 items-center justify-center border-l border-[#999] text-[#333]"><Down /></span>
            </div>
          </div>
          <TrackList />
          <div className="flex flex-1 items-center justify-end pt-1 pr-[2px]">
            <button aria-label="Show bus pane"><svg width="14" height="13"><path d="M1 1h12v11H1zM1 8.500h12" fill="none" stroke="#222" strokeWidth="1.5" /><path d="M7 3l3 3.500H4z" fill="#222" /></svg></button>
          </div>
        </div>
        <LevelScale />
        <div className="relative min-w-0 flex-1 pt-1">
          <Ruler />
          <div className="mt-[11px] border-l border-[#888]">
            <MidiClip />
            <AudioClip />
            <div className="h-[29px] bg-[#1f1f1f]" />
          </div>
          <div className="mt-[5px] flex h-[17px] items-center bg-[#f0f0f0] pl-[5px]">
            <button aria-label="Scroll left"><svg width="6" height="8" fill="none" stroke="#333" strokeWidth="1.8"><path d="M5 .5L1.500 4 5 7.500" /></svg></button>
          </div>
          <span className="absolute top-1 left-[156px] h-[352px] w-[2px] border-r border-[#777] bg-white" />
        </div>
      </div>
    </section>
  )
}

/* ---------- console ---------- */

const BANDS = [
  { tag: 'LOW', color: 'red', tone: 'text-[#f06a6a]', value: 'text-[#7a2438]', freq: '79', gain: '-0.9', angles: [-90, 0, -5] },
  { tag: 'LO MID', color: 'amber', tone: 'text-[#f5b922]', value: 'text-[#86681c]', freq: '317', gain: '0.0', angles: [-30, 0, 0] },
  { tag: 'HI MID', color: 'green', tone: 'text-[#4fd8a4]', value: 'text-[#1c5c44]', freq: '1262', gain: '0.0', angles: [28, 0, 0] },
  { tag: 'HIGH', color: 'blue', tone: 'text-[#58a8f0]', value: 'text-[#214a6e]', freq: '5024', gain: '0.0', angles: [90, 0, 0] },
]

function BandControls({ band }) {
  const values = [band.freq, '1.3', band.gain]
  return (
    <>
      <button className={`mb-[3px] h-[13px] w-[34px] rounded-[2px] bg-[#222] text-[7px] leading-[13px] font-bold whitespace-nowrap font-['DejaVu_Sans',sans-serif] ${band.tone}`}>{band.tag}</button>
      {values.map((v, i) => (
        <div key={i} className="flex flex-col items-center">
          <EqKnob color={band.color} angle={band.angles[i]} label={`${band.tag} ${i}`} />
          <span className={`text-[11px] leading-[14px] font-['DejaVu_Sans_Condensed',sans-serif] ${band.value}`}>{v}</span>
        </div>
      ))}
    </>
  )
}

function OuterBand({ band, right = false }) {
  return (
    <div className={`flex w-[50px] shrink-0 flex-col items-center pt-[6px] ${right ? 'pr-1' : 'pl-1'}`}>
      <BandControls band={band} />
      <button aria-label="Shelf" className={`mt-[2px] flex h-[12px] w-[34px] shrink-0 rounded-[2px] bg-[#1b1b1b] ${right ? 'justify-start' : 'justify-end'}`}>
        <span className="flex h-full w-[17px] items-center justify-center border border-[#222] bg-[#666]"><span className="h-2 w-[2px] bg-white" /></span>
      </button>
      <svg width="34" height="12" fill="none" stroke="#444" className="shrink-0">
        {right
          ? <path d="M3 9.500q3 0 4.500-5.500q1.500 5.500 4.500 5.500M19 4h4q2 5.500 7 5.500" />
          : <path d="M3 9.500q5 0 7-5.500h4M21 9.500q3 0 4.500-5.500q1.500 5.500 5 5.500" />}
      </svg>
      <div className={`flex w-[50px] flex-1 border-t-2 border-[#555] bg-[#8b8b8b] ${right ? 'flex-row-reverse self-start' : 'self-end'}`}>
        <span className="h-[40px] w-2 shrink-0 bg-[#505050] text-[7px] leading-2 text-[#ddd] [text-orientation:upright] [writing-mode:vertical-rl]">FREQ</span>
        <div className="h-7 overflow-hidden"><EqKnob angle={right ? 120 : -120} label="Filter frequency" /></div>
      </div>
    </div>
  )
}

function MidBand({ band, right = false }) {
  const marks = right
    ? [['6', 14, 9], ['12', 25, 9], ['18', 35, 14], ['24', 38, 23], ['30', 38, 32], ['36', 35, 41]]
    : [['12', 18, 9], ['6', 29, 9], ['18', 8, 14], ['24', 5, 23], ['30', 5, 32], ['36', 8, 41]]
  const cx = right ? 20 : 23
  return (
    <div className={`flex w-[43px] shrink-0 flex-col items-center pt-[6px] ${right ? 'pr-[3px]' : 'pl-[3px]'}`}>
      <BandControls band={band} />
      <svg width="43" height="47" className={`mt-[6px] block shrink-0 border-t-2 border-[#555] bg-[#8b8b8b] font-['DejaVu_Sans',sans-serif] ${right ? 'self-start' : 'self-end'}`}>
        {marks.map(([t, x, y]) => <text key={t} x={x} y={y} fontSize="6" textAnchor="middle" fill="#222">{t}</text>)}
        <circle cx={cx} cy="27" r="12.500" fill="#444" stroke="#eee" strokeWidth="1.5" strokeDasharray="4 1" />
        <circle cx={cx} cy="27" r="11" fill="#262626" />
        <path d={`M${cx} 16v9`} stroke="#fff" strokeWidth="2" transform={`rotate(${right ? 12 : -12} ${cx} 27)`} />
      </svg>
    </div>
  )
}

const EQ_MODES = [['Hybrid', true], ['Pure', false], ['E-Type', false], ['G-Type', false]]

function EqModule() {
  return (
    <div className="flex w-[201px] shrink-0 flex-col bg-[#9c9c9c] pl-[3px] font-['Liberation_Sans',sans-serif]">
      <div className="flex h-4 shrink-0 justify-end gap-[64px] pr-[5px] text-[11px] leading-[13px] text-[#444]"><span>Ratio</span><span>Dry/Wet</span></div>
      <div className="-ml-[3px]"><Divider /></div>
      <div className="flex h-[24px] shrink-0 items-center">
        <span className="h-4 w-[6px] bg-[repeating-linear-gradient(#555_0_1px,transparent_1px_3px)]" />
        <svg width="16" height="14" className="ml-[5px]" fill="none" stroke="#333"><path d="M0 7h2Q5 7 8 1q3 6 6 6h2M2 7q3 0 6 6 3-6 6-6" /></svg>
        <span className="flex-1 pl-5 text-center text-[12px] text-[#222]">EQ</span>
        <svg width="10" height="8" className="mr-2 ml-6"><path d="M0 0l5 4-5 4zM5 0l5 4-5 4z" fill="#222" /></svg>
        <span className="mr-2 h-2 w-2 rounded-full border border-[#555] bg-[#e6dc4a]" />
        <button aria-label="EQ power" className="mr-[6px] flex h-[15px] w-[15px] items-center justify-center rounded-full bg-[#48b6e6] text-[#0e4a78]"><PowerIcon size={9} /></button>
        <svg width="8" height="10" className="mr-2"><path d="M0 0h8L4 4zM0 5h8L4 9z" fill="#222" /></svg>
      </div>
      <div className="h-[109px] shrink-0 bg-linear-to-b from-[#3e3e3e] to-[#0c0c0c]">
        <div className="grid h-[20px] grid-cols-4 items-center pl-[5px] text-[11px] text-[#8d8d8d]">
          {EQ_MODES.map(([m, on]) => (
            <label key={m} className="flex items-center gap-[3px] whitespace-nowrap">
              <input type="radio" name="eqmode" defaultChecked={on} className="h-[7px] w-[7px] shrink-0 appearance-none rounded-full border border-[#111] bg-[#666] checked:bg-[#6ee6ff]" />
              {m}
            </label>
          ))}
        </div>
        <svg width="198" height="89" className="block font-['DejaVu_Sans',sans-serif]" fontSize="6" fill="#999">
          <path d="M15 2.5h169M15 14.5h169M15 26.5h169M15 50.5h169M15 62.5h169M15 74.5h169M57.5 2v73M99.5 2v73M141.5 2v73M184.5 2v73" stroke="#3e3e3e" />
          <path d="M15.5 2v73" stroke="#888" />
          {[6, 4, 2, 0, -2, -4, -6].map((n, i) => <text key={n} x="11" y={5 + i * 12} textAnchor="end">{n}</text>)}
          {['20', '112', '632', '3K7', '20K'].map((t, i) => <text key={t} x={15 + i * 42} y="83" textAnchor="middle">{t}</text>)}
          <path d="M24 38.5q14 0 24 5 10-5 28-5z" fill="#7d3b33" />
          <path d="M15 38.5h5q14 0 28 5 12-5 36-5h100" fill="none" stroke="#fff" strokeWidth="1.8" />
        </svg>
      </div>
      <div className="flex min-h-0 flex-1 overflow-hidden bg-linear-to-b from-[#b2b2b2] to-[#949494]">
        <OuterBand band={BANDS[0]} />
        <span className="mt-[6px] h-[187px] w-[2px] shrink-0 bg-[#555]" />
        <MidBand band={BANDS[1]} />
        <div className="flex w-2 shrink-0 flex-col bg-[#555] text-[7px] leading-2 text-[#ddd] *:[text-orientation:upright] *:[writing-mode:vertical-rl]">
          <span className="mt-[28px] h-[56px]">FREQ</span>
          <span className="h-[34px]">Q</span>
          <span className="h-[66px]">LEVEL</span>
          <span className="h-[38px]">SLOPE</span>
        </div>
        <MidBand band={BANDS[2]} right />
        <span className="mt-[6px] h-[187px] w-[2px] shrink-0 bg-[#555]" />
        <OuterBand band={BANDS[3]} right />
      </div>
    </div>
  )
}

function ConsoleStrip({ on, plugin }) {
  return (
    <div className="flex w-[98px] shrink-0 flex-col bg-[#a1a1a1] pt-px">
      <ProChannel on={on} curve={on} />
      <Divider />
      <FxRack plugin={plugin} />
      <Divider />
      <Sends off={!on} />
      <Divider />
    </div>
  )
}

function Console() {
  return (
    <section className="flex min-h-0 flex-1 flex-col overflow-hidden rounded-tl-[6px] bg-[#c6c6c6]">
      <MenuStrip wide items={['モジュール', 'ストリップ', 'トラック', 'バス', 'オプション']} />
      <div className="mt-[2px] ml-[3px] flex min-h-0 flex-1 overflow-hidden bg-[#1c1c1c] pl-1">
        <div className="flex w-[573px] shrink-0 gap-1 overflow-hidden">
          <div className="flex w-[98px] shrink-0 flex-col bg-[#a1a1a1]">
            <div className="h-[103px] shrink-0" />
            <Divider />
            <FxRack />
            <Divider />
            <div className="flex flex-1 flex-col gap-[5px] px-[2px] pt-1">
              <Picker icon="C" value="1: Roland G" label="Channel" className="h-[19px]" />
              <Picker icon="B" value="0RlndGSCpT" label="Bank" className="h-[19px]" />
              <Picker icon="P" value="Piano 1" label="Patch" className="h-[19px]" />
            </div>
            <Divider />
            <div className="h-px" />
          </div>
          <ConsoleStrip on />
          <EqModule />
          <div className="w-[101px] shrink-0 bg-[#333]" />
          <div className="w-[60px] shrink-0 bg-[#333]" />
        </div>
        <span className="mr-1 w-1 shrink-0 bg-linear-to-b from-[#ddd] via-[#f4f4fa] to-[#b4b8c8]" />
        <div className="flex min-w-0 flex-1 gap-1 overflow-hidden">
          <ConsoleStrip plugin="TL-64 Tube L..." />
          <ConsoleStrip plugin="(Lexicon Pant..." />
          <ConsoleStrip plugin="Boost11" />
          <div className="ml-[2px] w-[100px] shrink-0 bg-[#333]" />
          <div className="min-w-0 flex-1 bg-[#333]" />
        </div>
      </div>
    </section>
  )
}

const MENUS = ['ファイル(F)', '編集(E)', '表示(V)', '挿入(I)', 'プロセス(P)', 'プロジェクト(J)', 'ユーティリティ(U)', 'ウィンドウ(W)', 'ヘルプ(H)']

export default function App() {
  return (
    <div className="flex h-screen flex-col overflow-hidden bg-white">
      <header className="shrink-0 text-[11px] font-['Open_Sans','Noto_Sans_CJK_JP',sans-serif]">
        <div className="flex h-[18px] items-center gap-[5px] text-[#777]">
          <svg width="15" height="16"><rect width="15" height="16" fill="#1b1b1b" /><path d="M5 7v4M7.5 6v5M10 5v6" stroke="#ccc" strokeWidth="1.3" /></svg>
          <h1 className="leading-none [font-feature-settings:'palt']">愛の讃歌ピアノ伴奏 - SONAR Platinum</h1>
        </div>
        <nav className="flex h-[23px] items-center gap-[13px] pl-1 text-[#555] [font-feature-settings:'palt']">
          {MENUS.map(m => <button key={m} className="leading-none whitespace-nowrap">{m}</button>)}
        </nav>
      </header>
      <ToolBar />
      <div className="flex h-[30px] shrink-0 items-center gap-[6px] bg-linear-to-b from-[#bccad8] to-[#d8e5f2] pt-[6px] pl-[9px] text-[11px] text-[#8e979f] font-['Open_Sans','Noto_Sans_CJK_JP',sans-serif]">
        <DocLogo />
        <span className="leading-none [font-feature-settings:'palt']">愛の讃歌ピアノ伴奏* - トラック</span>
      </div>
      <div className="flex min-h-0 flex-1 bg-[#d6e4f1] pl-[5px]">
        <div className="flex min-w-0 flex-1 gap-[5px] bg-[#222426] pt-[5px] pl-[5px]">
          <Inspector />
          <div className="flex min-w-0 flex-1 flex-col gap-1">
            <TrackView />
            <Console />
          </div>
        </div>
      </div>
    </div>
  )
}
